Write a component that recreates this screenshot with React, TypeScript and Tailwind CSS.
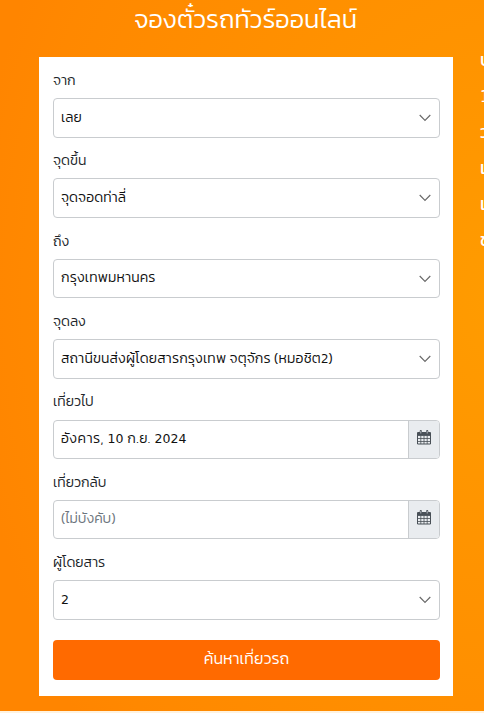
import type { ReactNode } from "react";

type TripField = {
  label: string;
  value: ReactNode;
  kind: "select" | "date";
  valueClass?: string;
};

function Num({ children }: { children: ReactNode }) {
  return <span className="font-['DejaVu_Sans',sans-serif] text-[12.5px] font-normal tracking-[0.1px]">{children}</span>;
}

const fields: TripField[] = [
  { label: "จาก", value: "เลย", kind: "select" },
  { label: "จุดขึ้น", value: "จุดจอดท่าลี่", kind: "select", valueClass: "tracking-[0.1px]" },
  { label: "ถึง", value: "กรุงเทพมหานคร", kind: "select", valueClass: "tracking-[0.15px]" },
  { label: "จุดลง", value: "สถานีขนส่งผู้โดยสารกรุงเทพ จตุจักร (หมอชิต2)", kind: "select", valueClass: "tracking-[0.16px]" },
  {
    label: "เที่ยวไป",
    value: (
      <>
        อังคาร, <Num>10</Num> ก.ย. <Num>2024</Num>
      </>
    ),
    kind: "date",
    valueClass: "tracking-[0.45px]",
  },
  { label: "เที่ยวกลับ", value: "(ไม่บังคับ)", kind: "date", valueClass: "text-[#6c757d]" },
  { label: "ผู้โดยสาร", value: <Num>2</Num>, kind: "select" },
];

function Chevron() {
  return (
    <svg className="mr-[8px] h-[8px] w-[12px] shrink-0" viewBox="0 0 12 8" fill="none" stroke="#6b6b6b" strokeWidth="1.2">
      <path d="M0.7 1 L6 6.5 L11.3 1" />
    </svg>
  );
}

function Calendar() {
  return (
    <svg className="h-[15px] w-[14px]" viewBox="0 0 14 15" fill="none" stroke="#495057" strokeWidth="1">
      <path d="M1 2h12v3.500h-12z" fill="#495057" stroke="none" />
      <path d="M0.500 2.500h13v11.500h-13z" />
      <path d="M0.500 5.500h13M0.500 8.500h13M0.500 11.500h13M3.800 5.500v8.500M7 5.500v8.500M10.200 5.500v8.500" strokeWidth="0.800" />
      <path d="M3.800 1.200v2M10.200 1.200v2" strokeWidth="2.200" strokeLinecap="round" />
      <path d="M3.800 1v2.500M10.200 1v2.500" stroke="#cbd0d5" strokeWidth="0.800" />
    </svg>
  );
}

function Control({ children }: { children: ReactNode }) {
  return (
    <div className="flex h-[39.5px] items-center overflow-hidden rounded-[4px] border border-[#c9cccf] bg-white pl-[7px]">
      {children}
    </div>
  );
}

function Field({ field }: { field: TripField }) {
  return (
    <div className="h-[80.4px]">
      <div className="flex h-[31px] items-center pb-[3.4px] text-[14px] leading-none text-[#212529]">
        <span className="whitespace-nowrap">{field.label}</span>
      </div>
      <Control>
        <div className="min-w-0 flex-1 pb-[0.5px] text-[14px] leading-[24px]">
          <span className={`whitespace-nowrap ${field.valueClass ?? ""}`}>{field.value}</span>
        </div>
        {field.kind === "select" ? (
          <Chevron />
        ) : (
          <div className="flex h-full w-[31px] items-center justify-center border-l border-[#c9cccf] bg-[#e9ecef] pb-[4px]">
            <Calendar />
          </div>
        )}
      </Control>
    </div>
  );
}

const sideLines: ReactNode[] = [
  "บ",
  <span className="font-['DejaVu_Sans',sans-serif] text-[15px]">1</span>,
  "ว",
  "เ",
  "เ",
  "ข",
];

export default function App() {
  return (
    <div className="h-[713px] w-[484px] overflow-hidden bg-[#fff3e0] font-['Kanit','Prompt','Noto_Sans_Thai','Noto_Sans',sans-serif] font-light text-[#111]">
      <div className="flex h-[711px] flex-col bg-[radial-gradient(ellipse_540px_700px_at_510px_300px,#ff9c00_0%,#ff9500_30%,#ff8f00_58%,#ff8800_90%,#ff8500_100%)]">
        <h1 className="flex h-[57px] items-start justify-center pt-[2px] pl-[7px] text-[25.5px] leading-[34px] text-white">
          <span className="whitespace-nowrap">จองตั๋วรถทัวร์ออนไลน์</span>
        </h1>
        <div className="flex">
          <form className="ml-[39px] h-[639px] w-[414px] shrink-0 bg-white pt-[10px] pr-[13px] pl-[14px]">
            {fields.map((f) => (
              <Field key={f.label} field={f} />
            ))}
            <button type="button" className="mt-[10.2px] flex h-[40px] w-full items-center justify-center rounded-[4px] bg-[#ff6a00] pb-[3px] text-[16px] text-white">
              <span className="whitespace-nowrap">ค้นหาเที่ยวรถ</span>
            </button>
          </form>
          <div className="-mt-[15px] ml-[27px] w-[4px] text-[18px] leading-[36px] font-normal text-white">
            {sideLines.map((l, i) => (
              <div key={i} className="h-[36px] whitespace-nowrap">{l}</div>
            ))}
          </div>
        </div>
      </div>
    </div>
  );
}
